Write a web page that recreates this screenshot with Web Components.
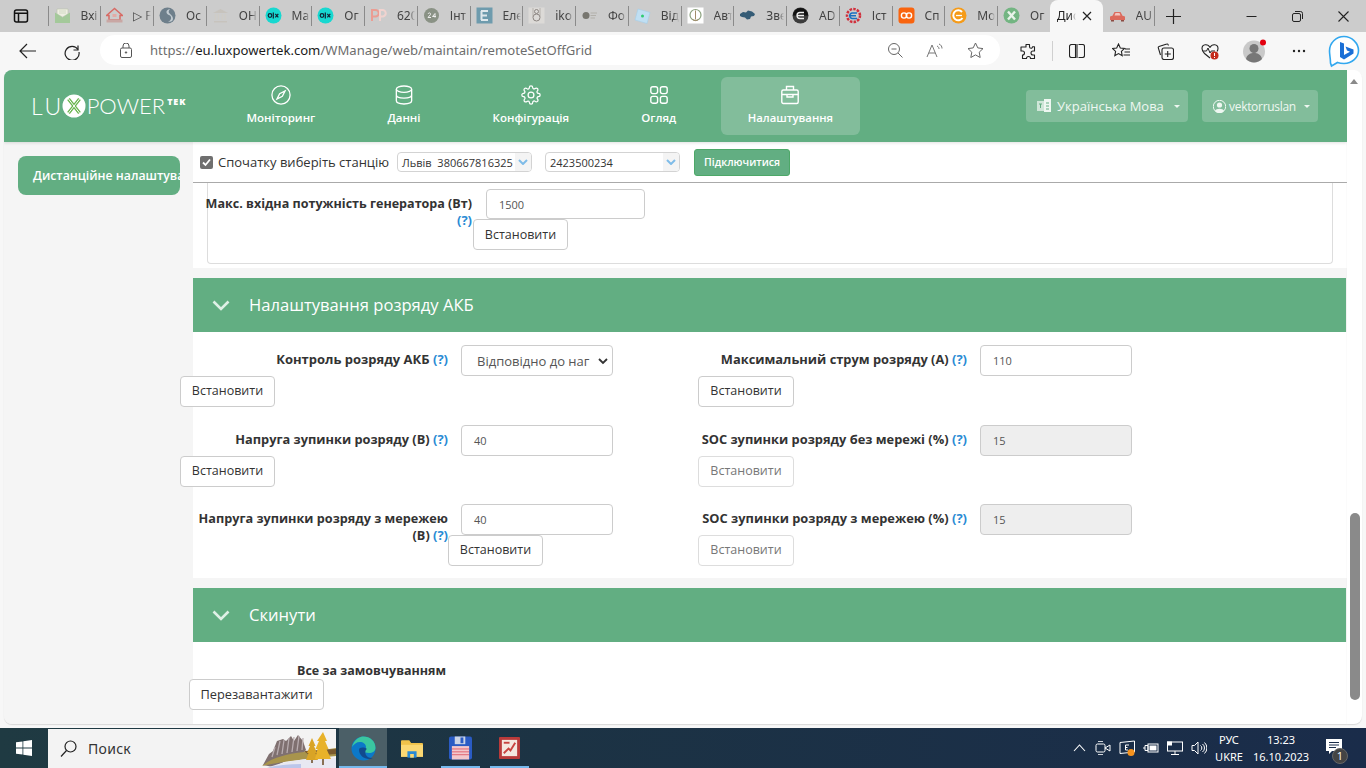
<!DOCTYPE html>
<html lang="uk">
<head>
<meta charset="utf-8">
<title>LuxPower</title>
<style>
    html, body { margin: 0; height: 100%; overflow: hidden; background: #f7f7f7; }
    body { display: flex; flex-direction: column; width: 1366px; height: 768px; font-family: "Open Sans", "Noto Sans", sans-serif; }
</style>
</head>
<body>
<browser-chrome></browser-chrome>
<page-frame>
    <app-header></app-header>
    <remote-panel></remote-panel>
</page-frame>
<win-taskbar></win-taskbar>

<script>
const tabIcons = {
    mail: '<path d="M3 7V2h11v5l-5.500 3z" fill="#eeeee2" stroke="#b9c4ac" stroke-width=".6"/><path d="M1 5.500l7.500 5 7.500-5V16H1z" fill="#a4c99a"/><path d="M5 4h7M5 6h7" stroke="#c9d4bc" stroke-width=".8"/>',
    house: '<path d="M8.500 1.500L.5 8.500h2.500V13h11V8.500h2.500z" fill="none" stroke="#d76a64" stroke-width="1.500"/><rect x=".5" y="12.500" width="16" height="3" fill="#c9a7a4"/><rect x="6.500" y="7" width="4" height="3" fill="#e3aaa5"/>',
    sphere: '<circle cx="8.500" cy="8.500" r="8" fill="#6e7f8b"/><path d="M11 2c-5 1-4 5-1 6s3 5-1 7c5 0 6-3 4-6s-5-3-2-7z" fill="#c3ccd2"/>',
    bank: '<path d="M8.500 2L1 6h15zM2 14h13v1.500H2z" fill="#c7c3bd"/><path d="M3.500 7v6M6.500 7v6M10.500 7v6M13.500 7v6" stroke="#cfccc6" stroke-width="1.400"/>',
    olx: '<circle cx="8.500" cy="8.500" r="8" fill="#17d8d0"/><circle cx="5" cy="8.500" r="1.800" fill="none" stroke="#123" stroke-width="1.200"/><path d="M8.300 5.500v6" stroke="#123" stroke-width="1.200"/><path d="M10.300 6.800l3 3.500m0-3.500l-3 3.500" stroke="#123" stroke-width="1.200"/>',
    pp: '<path d="M2 14V3h3.500a3 3 0 010 6.500H2" fill="none" stroke="#eb9d93" stroke-width="2"/><path d="M10 14V3h2.500a3 3 0 010 6.500H10" fill="none" stroke="#f1d3cf" stroke-width="2"/>',
    n24: '<circle cx="8.500" cy="8.500" r="7.500" fill="#8a9285"/><path d="M5 7c1-2 3-1 2.500.5L5 10.500h3M12 10.500v-4l-2.500 3h3.500" fill="none" stroke="#eee" stroke-width="1"/>',
    e: '<rect x=".5" y=".5" width="16" height="16" fill="#6e9bad"/><path d="M5 4h7M5 8.500h6M5 13h7M5.500 4v9" stroke="#dfe8ec" stroke-width="2" fill="none"/>',
    iko: '<rect x=".5" y=".5" width="16" height="16" fill="#dcdad7"/><circle cx="8.500" cy="10.500" r="3.500" fill="none" stroke="#8c8682"/><circle cx="8.500" cy="4.500" r="2" fill="none" stroke="#8c8682"/><path d="M5 1v9M12 1v9" stroke="#a6a19c" stroke-width=".7"/>',
    foto: '<circle cx="5" cy="8.500" r="3.500" fill="#77766f"/><path d="M9.500 6H16M9.500 8.500H15M9.500 11H14" stroke="#b2b0aa"/>',
    diamond: '<path d="M4 2l12 3.500-3 11L1 13z" fill="#c0dff3" stroke="#a5cfea" stroke-width=".6"/><circle cx="8.500" cy="9" r="1.500" fill="#2ecc71"/>',
    emblem: '<rect x=".5" y=".5" width="16" height="16" fill="#fff"/><circle cx="8.500" cy="8" r="5.500" fill="none" stroke="#8aa07d" stroke-width="1.200"/><path d="M8.500 3.500v9M5.500 12.500c2 1.500 4 1.500 6 0" stroke="#a28c6b" fill="none"/>',
    ukraine: '<path d="M1 7l3-2 3 .5 2-2 4 1 3 2.500-1 2-3 .5-1 2.500-3 .5-2-2-3-.5-2-1z" fill="#355c76"/>',
    dark: '<circle cx="8.500" cy="8.500" r="8" fill="#3c3c3c"/><path d="M1 8.500a7.500 7.500 0 0115 0z" fill="#111"/><path d="M12 5.500H8a3 3 0 000 6h4M5.500 8.500H12" stroke="#eee" fill="none" stroke-width="1.300"/>',
    gear: '<circle cx="8.500" cy="8.500" r="6.500" fill="none" stroke="#d12f3c" stroke-width="2.500" stroke-dasharray="2.500 1.200"/><path d="M12 6H7a2.800 2.800 0 000 5.500h5M5 8.700h6" fill="none" stroke="#1a6fc0" stroke-width="1.500"/>',
    orange: '<rect x=".5" y=".5" width="16" height="16" rx="3" fill="#f9640f"/><circle cx="6" cy="8.500" r="2.600" fill="none" stroke="#fff" stroke-width="1.400"/><circle cx="11" cy="8.500" r="2.600" fill="none" stroke="#fff" stroke-width="1.400"/>',
    swirl: '<circle cx="8.500" cy="8.500" r="8" fill="#f59b19"/><path d="M12 5a5 5 0 10.500 6" fill="none" stroke="#fff" stroke-width="2"/><path d="M6 8.500h6" stroke="#fff" stroke-width="1.300"/>',
    xgreen: '<circle cx="8.500" cy="8.500" r="8" fill="#73b582"/><path d="M5 4.500l7 8m0-8l-7 8" stroke="#e8f3e9" stroke-width="2.400"/>',
    car: '<path d="M1 9.500l2.500-.8L5.500 5h6l2 3.700 2.500.8V13H1z" fill="#dc6a5c"/><path d="M6.500 6h4l1 2.500h-6z" fill="#f3c5bf"/><rect x="2" y="13" width="3" height="1.500" fill="#8c4a42"/><rect x="12" y="13" width="3" height="1.500" fill="#8c4a42"/>'
};

class BrowserTab extends HTMLElement {
    connectedCallback() {
        const root = this.attachShadow({ mode: 'open' });
        const icon = this.getAttribute('icon');
        root.innerHTML = `
            <style>
                :host { display: block; position: relative; width: 52.750px; height: 32px; flex: none; }
                :host([sep])::before { content: ''; position: absolute; left: 0; top: 6px; height: 20px; width: 1px; background: #8a8a8a; }
                :host([active]) { background: #f7f7f7; border-radius: 8px 8px 0 0; }
                :host(:last-child) { width: 51px; }
                svg { position: absolute; left: 6px; top: 7px; width: 17px; height: 17px; }
                .label {
                    position: absolute; left: 33px; top: 7px; width: 18px; overflow: hidden; white-space: nowrap;
                    font: 12px/18px "Noto Sans", "Open Sans", sans-serif; color: #444;
                    -webkit-mask-image: linear-gradient(90deg, #000 70%, transparent);
                    mask-image: linear-gradient(90deg, #000 70%, transparent);
                }
                :host([active]) .label { left: 7px; width: 19px; color: #222; }
            </style>
            ${icon ? `<svg viewBox="0 0 17 17">${tabIcons[icon]}</svg>` : ''}
            <span class="label"><slot></slot></span>
            ${this.hasAttribute('active') ? '<svg style="left:32px;top:11px;width:10px;height:10px" viewBox="0 0 10 10"><path d="M1 1l8 8m0-8l-8 8" stroke="#222" stroke-width="1.200"/></svg>' : ''}
        `;
    }
}

class BrowserChrome extends HTMLElement {
    connectedCallback() {
        const root = this.attachShadow({ mode: 'open' });
        const tabs = [
            ['mail', 'Вхі'], ['house', '▷ F'], ['sphere', 'Ос'], ['bank', 'ОН'], ['olx', 'Ма'], ['olx', 'Ог'], ['pp', '620'],
            ['n24', 'Інт'], ['e', 'Еле'], ['iko', 'iko'], ['foto', 'Фо'], ['diamond', 'Від'], ['emblem', 'Авт'], ['ukraine', 'Зве'],
            ['dark', 'AD'], ['gear', 'Іст'], ['orange', 'Сп'], ['swirl', 'Мо'], ['xgreen', 'Ог'], ['', 'Дис'], ['car', 'AU']
        ];
        const tabHtml = tabs.map(([icon, text], i) => {
            const active = i === 19 ? ' active' : '';
            const sep = i === 19 || i === 20 ? '' : ' sep';
            return `<browser-tab icon="${icon}"${active}${sep}>${text}</browser-tab>`;
        }).join('');

        root.innerHTML = `
            <style>
                :host { display: block; flex: none; }
                .tabs { display: flex; height: 32px; background: #cccccc; }
                .tab-list { display: flex; }
                .slot { display: flex; align-items: center; justify-content: center; flex: none; }
                .tabs-toggle { width: 47.500px; padding-right: 6px; box-sizing: border-box; }
                .new-tab { width: 38px; border-left: 1px solid #8a8a8a; height: 20px; margin-top: 6px; box-sizing: border-box; }
                .spacer { flex: 1; }
                .win { width: 46px; }
                .bar { display: flex; align-items: center; height: 38px; background: #f7f7f7; padding-left: 6px; box-sizing: border-box; }
                .nav { width: 44px; height: 38px; }
                .address {
                    display: flex; align-items: center; width: 901px; height: 30px; margin-left: 6px; margin-top: -2px;
                    background: #fff; border-radius: 15px; padding: 0 5px 0 17px; box-sizing: border-box;
                }
                .lock { width: 18px; }
                .url { margin-left: 15px; flex: 1; font: 13.100px/18px "Noto Sans", "Open Sans", sans-serif; color: #6d6d6d; white-space: nowrap; }
                .url b { font-weight: 400; color: #1c1c1c; }
                .in { width: 40px; }
                .tools { display: flex; align-items: center; margin-left: 6px; }
                .tool { width: 44.500px; height: 38px; }
                .sep { width: 1px; height: 20px; background: #d0d0d0; margin: 0 1.500px; }
                svg { display: block; }
            </style>
            <div class="tabs">
                <div class="slot tabs-toggle">
                    <svg width="16" height="16" viewBox="0 0 16 16" fill="none" stroke="#111" stroke-width="1.500"><rect x="1.500" y="2" width="13" height="12" rx="2"/><path d="M1.500 5.200h13M5.500 5.200V14"/></svg>
                </div>
                <div class="tab-list">${tabHtml}</div>
                <div class="slot new-tab">
                    <svg width="15" height="15" viewBox="0 0 15 15"><path d="M7.500 0v15M0 7.500h15" stroke="#222" stroke-width="1.200"/></svg>
                </div>
                <div class="spacer"></div>
                <div class="slot win"><svg width="11" height="11" viewBox="0 0 11 11"><path d="M.5 5.500h10" stroke="#222"/></svg></div>
                <div class="slot win"><svg width="11" height="11" viewBox="0 0 11 11" fill="none" stroke="#222"><rect x=".5" y="2.500" width="8" height="8" rx="1.500"/><path d="M3 .5h5.500a2 2 0 012 2V8"/></svg></div>
                <div class="slot win"><svg width="11" height="11" viewBox="0 0 11 11"><path d="M.5.500l10 10m0-10l-10 10" stroke="#222" stroke-width="1.100"/></svg></div>
            </div>
            <div class="bar">
                <div class="slot nav"><svg width="18" height="16" viewBox="0 0 18 16" fill="none" stroke="#222" stroke-width="1.200"><path d="M17 8H1M8 1L1 8l7 7"/></svg></div>
                <div class="slot nav"><svg width="18" height="18" viewBox="0 0 18 18" fill="none" stroke="#222" stroke-width="1.200"><path d="M15 3.500V8h-4.500"/><path d="M15 7.500A7 7 0 1016 10"/></svg></div>
                <div class="address">
                    <div class="slot lock"><svg width="12" height="15" viewBox="0 0 12 15" fill="none" stroke="#555"><rect x=".5" y="5" width="11" height="9.500" rx="1.500"/><path d="M3 5V3a3 3 0 016 0v2"/><circle cx="6" cy="9.500" r=".7" fill="#555"/></svg></div>
                    <span class="url">https://<b>eu.luxpowertek.com</b>/WManage/web/maintain/remoteSetOffGrid</span>
                    <div class="slot in"><svg width="15" height="15" viewBox="0 0 15 15" fill="none" stroke="#666"><circle cx="6" cy="6" r="5.500"/><path d="M3.500 6h5M10 10l4.500 4.500"/></svg></div>
                    <div class="slot in"><svg width="18" height="15" viewBox="0 0 18 15" fill="none" stroke="#777"><path d="M1 14L6 2l5 12M2.800 10h6.400"/><path d="M11 3c1.500.5 2 2 2 3M13 1c2 .8 3 2.500 3 4.500"/></svg></div>
                    <div class="slot in"><svg width="17" height="16" viewBox="0 0 17 16" fill="none" stroke="#666"><path d="M8.500 1l2.300 4.900 5.200.7-3.800 3.600 1 5.300-4.700-2.600-4.700 2.600 1-5.300L1 6.600l5.200-.7z"/></svg></div>
                </div>
                <div class="tools">
                    <div class="slot tool"><svg width="16" height="17" viewBox="0 0 16 17" fill="none" stroke="#222" stroke-width="1.100"><path d="M6 1.500h3.500v2.300a1.500 1.500 0 003 0h2V8h-1.500a2 2 0 000 4H14.500v3.500H10.500a2 2 0 00-4 0H2.500V12a2 2 0 000-4H1V4h5z" stroke-linejoin="round"/></svg></div>
                    <div class="sep"></div>
                    <div class="slot tool"><svg width="16" height="14" viewBox="0 0 16 14" fill="none" stroke="#222" stroke-width="1.100"><path d="M6.500 .5H2.500a2 2 0 00-2 2v9a2 2 0 002 2h4zM9.500 .5h4a2 2 0 012 2v9a2 2 0 01-2 2h-4M8 0v14"/></svg></div>
                    <div class="slot tool"><svg width="18" height="16" viewBox="0 0 18 16" fill="none" stroke="#222" stroke-width="1.100"><path d="M6.500 1l1.800 4 4.200.5-3.100 2.900.8 4.300-3.700-2.100-3.700 2.100.8-4.300L.5 5.500 4.700 5zM13 6h5M12.500 9h5.500M11.500 12H18"/></svg></div>
                    <div class="slot tool"><svg width="17" height="17" viewBox="0 0 17 17" fill="none" stroke="#222" stroke-width="1.100"><rect x="5" y="5" width="11.500" height="11.500" rx="2"/><path d="M10.700 8v6M7.800 11h6"/><path d="M11.500 2.500l-.4-.9a1 1 0 00-1.300-.5L2 3.500a1 1 0 00-.7 1.300L3.500 12"/></svg></div>
                    <div class="slot tool"><svg width="18" height="17" viewBox="0 0 18 17"><path d="M9 4.500C7 .500 1 1 1 5.500c0 2 1 3.500 2.500 5L9 15" fill="none" stroke="#222" stroke-width="1.100"/><path d="M9 4.500c2-4 8-3.500 8 1 0 1-.3 2-1 3" fill="none" stroke="#222" stroke-width="1.100"/><path d="M2 8h3.500l1.500-3 2 5 1.200-2H14" fill="none" stroke="#222" stroke-width="1"/><circle cx="13.500" cy="12.500" r="4" fill="#c42b1c"/><path d="M13.500 10v3M13.500 14v1" stroke="#fff"/></svg></div>
                    <div class="slot tool"><svg width="24" height="24" viewBox="0 0 24 24"><circle cx="11" cy="12.500" r="11" fill="#c9c9c9"/><circle cx="11" cy="9.500" r="4.500" fill="#777"/><path d="M3 20c1-5 5-6 8-6s7 1 8 6a11 11 0 01-16 0z" fill="#777"/><circle cx="20" cy="3.500" r="3" fill="#e3000f"/></svg></div>
                    <div class="slot tool"><svg width="14" height="4" viewBox="0 0 14 4" fill="#222"><circle cx="2" cy="2" r="1.200"/><circle cx="7" cy="2" r="1.200"/><circle cx="12" cy="2" r="1.200"/></svg></div>
                    <div class="slot tool"><svg width="32" height="33" viewBox="0 0 32 33"><path d="M16 1.500C8 1.500 1.500 8 1.500 16c0 4 1 7 1 12l1 3 6-3.500c2 .7 4 1 6.500 1 8 0 14.500-6 14.500-13S24 1.500 16 1.500z" fill="#fff" stroke="#32a8ef" stroke-width="1.600"/><path d="M12 7l4 1.500V20l6-3.300-3-1.300-1.500-4 8 3v4L16 24.500l-4-2.500z" fill="#1b6fd6"/></svg></div>
                </div>
            </div>
        `;
    }
}

class PageFrame extends HTMLElement {
    connectedCallback() {
        const root = this.attachShadow({ mode: 'open' });
        root.innerHTML = `
            <style>
                :host { display: flex; flex: none; height: 658px; padding: 0 4px 4px 4px; box-sizing: border-box; background: #f7f7f7; }
                .page {
                    display: flex; flex-direction: column; width: 1343px; height: 654px; overflow: hidden;
                    border-radius: 8px 0 0 8px; background: #f5f5f5; box-shadow: 0 1px 1px #d8d8d8;
                }
                .scrollbar { position: relative; width: 15px; background: #fff; border-radius: 0 8px 8px 0; box-shadow: 0 1px 1px #d8d8d8; }
                .up { position: absolute; left: 3px; top: 9px; width: 0; height: 0; border: 4.500px solid transparent; border-top: 0; border-bottom: 5px solid #8a8a8a; }
                .thumb { position: absolute; left: 3px; top: 443px; width: 10px; height: 187px; border-radius: 5px; background: #8a8a8a; }
            </style>
            <div class="page"><slot></slot></div>
            <div class="scrollbar"><div class="up"></div><div class="thumb"></div></div>
        `;
    }
}

class NavItem extends HTMLElement {
    connectedCallback() {
        const root = this.attachShadow({ mode: 'open' });
        root.innerHTML = `
            <style>
                :host {
                    display: flex; flex-direction: column; align-items: center; height: 58px; padding: 8px 27.500px 0; box-sizing: border-box;
                    border-radius: 6px; color: #fff; font-size: 11.500px; font-weight: 600; line-height: 16px; white-space: nowrap;
                }
                :host([active]) { background: #82bd9b; font-size: 11.300px; padding: 8px 27px 0; }
                ::slotted(svg) { display: block; margin-bottom: 5px; }
            </style>
            <slot name="icon"></slot>
            <slot></slot>
        `;
    }
}

class AppHeader extends HTMLElement {
    connectedCallback() {
        const root = this.attachShadow({ mode: 'open' });
        root.innerHTML = `
            <style>
                :host {
                    display: flex; align-items: center; flex: none; height: 72px; padding: 0 29px; box-sizing: border-box;
                    background: #62ae82; box-shadow: 0 1px 3px rgba(0,0,0,.12); position: relative; z-index: 2;
                }
                .logo {
                    display: flex; align-items: center; width: 188px; margin-left: -2px; flex: none; color: #fff; font: 300 22px/24px Lato, "Open Sans", sans-serif;
                }
                .logo .lu { font-size: 23px; letter-spacing: 2.500px; }
                .logo svg { margin: 0 1px 0 -2px; flex: none; }
                .logo sup { font: 800 9px/8px "Open Sans", sans-serif; letter-spacing: .9px; align-self: flex-start; margin: 4px 0 0 2px; }
                nav { display: flex; gap: 17.100px; }
                .grow { flex: 1; }
                .pill {
                    display: flex; align-items: center; height: 32px; border-radius: 4px; background: #82bd9b; color: #eef7f1;
                    font-size: 13px; box-sizing: border-box; flex: none;
                }
                .lang { width: 162px; padding-left: 11px; margin-right: 14px; }
                .user { width: 116px; padding-left: 11px; font-size: 12px; letter-spacing: -.3px; }
                .caret { width: 0; height: 0; border: 3px solid transparent; border-top-color: #eef7f1; border-bottom: 0; margin-left: auto; margin-right: 8px; }
            </style>
            <div class="logo">
                <span class="lu">LU</span><svg width="24" height="24" viewBox="0 0 24 24"><circle cx="12" cy="12" r="11.500" fill="#fff"/><path d="M6.500 5l11 14m0-14l-11 14" stroke="#6ab54f" stroke-width="3.400"/><path d="M6.500 5l11 14m0-14l-11 14" stroke="#fff" stroke-width="1"/></svg><span>POWER</span><sup>TEK</sup>
            </div>
            <nav>
                <nav-item>
                    <svg slot="icon" width="20" height="20" viewBox="0 0 22 22" fill="none" stroke="#fff" stroke-width="1.400"><circle cx="11" cy="11" r="10"/><path d="M15.500 6.500l-3 6-6 3 3-6z"/></svg>
                    Моніторинг
                </nav-item>
                <nav-item>
                    <svg slot="icon" width="18" height="20" viewBox="0 0 20 22" fill="none" stroke="#fff" stroke-width="1.500"><ellipse cx="10" cy="4.500" rx="8.500" ry="3.500"/><path d="M1.500 4.500v13c0 2 3.800 3.500 8.500 3.500s8.500-1.500 8.500-3.500v-13M1.500 11c0 2 3.800 3.500 8.500 3.500s8.500-1.500 8.500-3.500"/></svg>
                    Данні
                </nav-item>
                <nav-item>
                    <svg slot="icon" width="20" height="20" viewBox="0 0 24 24" fill="none" stroke="#fff" stroke-width="1.500"><circle cx="12" cy="12" r="3.500"/><path d="M19.400 15a1.650 1.650 0 0 0 .33 1.820l.06.06a2 2 0 0 1 0 2.830 2 2 0 0 1-2.830 0l-.06-.06a1.650 1.650 0 0 0-1.820-.33 1.650 1.650 0 0 0-1 1.510V21a2 2 0 0 1-2 2 2 2 0 0 1-2-2v-.09A1.650 1.650 0 0 0 9 19.400a1.650 1.650 0 0 0-1.820.33l-.06.06a2 2 0 0 1-2.830 0 2 2 0 0 1 0-2.830l.06-.06a1.650 1.650 0 0 0 .33-1.820 1.650 1.650 0 0 0-1.510-1H3a2 2 0 0 1-2-2 2 2 0 0 1 2-2h.09A1.650 1.650 0 0 0 4.600 9a1.650 1.650 0 0 0-.33-1.820l-.06-.06a2 2 0 0 1 0-2.830 2 2 0 0 1 2.830 0l.06.06a1.650 1.650 0 0 0 1.820.33H9a1.650 1.650 0 0 0 1-1.510V3a2 2 0 0 1 2-2 2 2 0 0 1 2 2v.09a1.650 1.650 0 0 0 1 1.510 1.650 1.650 0 0 0 1.820-.33l.06-.06a2 2 0 0 1 2.830 0 2 2 0 0 1 0 2.830l-.06.06a1.650 1.650 0 0 0-.33 1.820V9a1.650 1.650 0 0 0 1.510 1H21a2 2 0 0 1 2 2 2 2 0 0 1-2 2h-.09a1.650 1.650 0 0 0-1.510 1z"/></svg>
                    Конфігурація
                </nav-item>
                <nav-item>
                    <svg slot="icon" width="18" height="20" viewBox="0 0 18 20" fill="none" stroke="#fff" stroke-width="1.400"><rect x=".8" y="1.800" width="6.800" height="6.800" rx="2"/><rect x="10.400" y="1.800" width="6.800" height="6.800" rx="2"/><rect x=".8" y="11.400" width="6.800" height="6.800" rx="2"/><rect x="10.400" y="11.400" width="6.800" height="6.800" rx="2"/></svg>
                    Огляд
                </nav-item>
                <nav-item active>
                    <svg slot="icon" width="18" height="20" viewBox="0 0 18 20" fill="none" stroke="#fff" stroke-width="1.400"><rect x=".8" y="5" width="16.400" height="13.500" rx="1.500"/><path d="M5.500 5V1.500h7V5M.8 9.500h16.400M6 9.500V12h6V9.500"/></svg>
                    Налаштування
                </nav-item>
            </nav>
            <div class="grow"></div>
            <div class="pill lang">
                <svg width="14" height="14" viewBox="0 0 14 14" style="margin-right:6px"><rect x="0" y="2" width="7" height="10" fill="#cfe6d8"/><rect x="7" y="0" width="7" height="13" fill="#eef7f1"/><path d="M2 5h3M3.500 5v4M9 4h3M9 7h3M9 10h3" stroke="#62ae82"/></svg>
                Українська Мова
                <span class="caret"></span>
            </div>
            <div class="pill user">
                <svg width="13" height="13" viewBox="0 0 13 13" style="margin-right:3px"><circle cx="6.500" cy="6.500" r="6.200" fill="none" stroke="#eef7f1"/><circle cx="6.500" cy="5" r="2.600" fill="#eef7f1"/><path d="M2 11c1-3 8-3 9 0a6 6 0 01-9 0z" fill="#eef7f1"/></svg>
                vektorruslan
                <span class="caret"></span>
            </div>
        `;
    }
}

class FakeSelect extends HTMLElement {
    connectedCallback() {
        const root = this.attachShadow({ mode: 'open' });
        root.innerHTML = `
            <style>
                :host {
                    display: flex; align-items: center; width: 135px; height: 20px; box-sizing: border-box; flex: none; overflow: hidden;
                    border: 1px solid #d3d3d3; border-radius: 4px; background: #fff; font-size: 11px; color: #333; white-space: pre;
                }
                .text { flex: 1; overflow: hidden; padding-left: 4px; }
                .arrow { width: 16px; height: 100%; display: flex; align-items: center; justify-content: center; background: #f4f4f4; flex: none; }
            </style>
            <span class="text"><slot></slot></span>
            <span class="arrow"><svg width="10" height="6" viewBox="0 0 10 6" fill="none" stroke="#7fbce8" stroke-width="2"><path d="M1 1l4 4 4-4"/></svg></span>
        `;
    }
}

class SettingField extends HTMLElement {
    connectedCallback() {
        const root = this.attachShadow({ mode: 'open' });
        const disabled = this.hasAttribute('disabled');
        const isSelect = this.hasAttribute('select');
        root.innerHTML = `
            <style>
                :host { display: block; }
                .row { display: flex; align-items: flex-start; height: var(--row-h, 31px); }
                label {
                    display: block; width: var(--label-w, 249px); margin-right: var(--gap, 13px); padding-top: 6px; flex: none; text-align: right;
                    font-size: var(--label-size, 12.800px); font-weight: 700; line-height: 17px; color: #333;
                }
                .hint { color: #2a8bd4; font-size: 13px; }
                .box {
                    display: flex; align-items: center; width: var(--input-w, 152px); height: var(--row-h, 31px); box-sizing: border-box; padding-left: 12px; flex: none;
                    border: 1px solid #ccc; border-radius: 4px; background: #fff; font-size: 11px; color: #555;
                }
                .box.off { background: #eee; }
                .box.select { font-size: 13px; padding-left: 15px; position: relative; overflow: hidden; white-space: nowrap; }
                .box.select span { display: block; width: 119px; overflow: hidden; }
                .box.select svg { position: absolute; right: 4px; top: 12px; }
                button {
                    display: block; width: var(--btn-w, 95px); height: 31px; margin-left: var(--btn-x, 0px); padding: 0 0 var(--btn-pb, 2px); box-sizing: border-box;
                    border: 1px solid #ccc; border-radius: 4px; background: #fff; color: #333; font: 12.500px "Open Sans", sans-serif;
                }
                button[disabled] { color: #777; border-color: #ddd; }
            </style>
            <div class="row">
                <label><slot></slot> <span class="hint">(?)</span></label>
                <div class="box${disabled ? ' off' : ''}${isSelect ? ' select' : ''}">
                    ${isSelect ? `<span>${this.getAttribute('value')}</span><svg width="10" height="7" viewBox="0 0 10 7" fill="none" stroke="#333" stroke-width="1.800"><path d="M1 1l4 4 4-4"/></svg>` : this.getAttribute('value')}
                </div>
            </div>
            <button${disabled ? ' disabled' : ''}>Встановити</button>
        `;
    }
}

class SectionPanel extends HTMLElement {
    connectedCallback() {
        const root = this.attachShadow({ mode: 'open' });
        root.innerHTML = `
            <style>
                :host { display: block; margin-top: 10px; }
                .head {
                    display: flex; align-items: center; width: 1153px; height: 54px; padding-left: 19px; box-sizing: border-box;
                    background: #62ae82; color: #fff; font-size: 16.600px;
                }
                svg { margin-right: 19px; }
                .title { margin-top: -2px; }
                .body { background: #fff; }
            </style>
            <div class="head">
                <svg width="18" height="11" viewBox="0 0 18 11" fill="none" stroke="#dff0e6" stroke-width="2.600"><path d="M1.500 1.500L9 9l7.500-7.500"/></svg>
                <span class="title">${this.getAttribute('heading')}</span>
            </div>
            <div class="body"><slot></slot></div>
        `;
    }
}

class RemotePanel extends HTMLElement {
    connectedCallback() {
        const root = this.attachShadow({ mode: 'open' });
        root.innerHTML = `
            <style>
                :host { display: flex; flex: 1; min-height: 0; }
                aside { width: 189px; flex: none; padding: 14px 0 0 14px; box-sizing: border-box; background: #f5f5f5; }
                .side-btn {
                    display: flex; align-items: center; width: 162px; height: 39px; padding-left: 15px; box-sizing: border-box; overflow: hidden;
                    border-radius: 8px; background: #62ae82; color: #fff; font-size: 12.300px; font-weight: 600; white-space: nowrap;
                }
                main { display: flex; flex-direction: column; flex: 1; min-width: 0; position: relative; }
                .station {
                    display: flex; align-items: center; flex: none; height: 41px; padding-left: 7px; box-sizing: border-box;
                    background: #fff; border-bottom: 1px solid #aaa; font-size: 13px; color: #333;
                }
                .check { width: 13px; height: 13px; border-radius: 2px; background: #6f6f6f; flex: none; display: flex; align-items: center; justify-content: center; margin-right: 5px; }
                .station .text { width: 179px; flex: none; white-space: nowrap; }
                .connect {
                    display: flex; align-items: center; justify-content: center; width: 96px; height: 27px; margin-left: 14px; box-sizing: border-box; flex: none;
                    border: 1px solid #4da868; border-radius: 3px; background: #62ae82; color: #fff; font-size: 10.500px; font-weight: 600;
                }
                fake-select + fake-select { margin-left: 13px; }
                .scroll { flex: 1; min-height: 0; background: #f5f5f5; }
                .first { background: #fff; padding: 0 14px 4px; height: 85px; box-sizing: border-box; }
                .inner {
                    height: 81px; padding: 6px 0 0; box-sizing: border-box; border: 1px solid #ddd; border-top: 0; border-radius: 0 0 4px 4px;
                }
                .inner setting-field { margin-left: -3px; --label-w: 267px; --input-w: 159px; --btn-x: 268px; --gap: 14px; --row-h: 30px; --label-size: 12.550px; --btn-pb: 0px; }
                .grid {
                    display: grid; grid-template-columns: 499px 1fr; row-gap: 17.500px; padding: 13px 0 12px 6px;
                }
                .left { --btn-x: -19px; }
                .right { --label-w: 269px; --btn-w: 96px; --label-size: 12.850px; }
                .left.big { --label-size: 13px; }
                .left.shift { --btn-x: 250px; --label-w: 250px; --gap: 13px; margin-left: -1px; --label-size: 12.700px; }
                .reset { height: 82px; padding: 20px 0 0 104px; box-sizing: border-box; }
                .reset .title { width: 149px; font-size: 12.500px; font-weight: 700; line-height: 17px; color: #333; white-space: nowrap; }
                .reset button {
                    display: block; width: 135px; height: 31px; margin-left: -108px; padding: 0 0 2px; border: 1px solid #ccc; border-radius: 4px;
                    background: #fff; color: #333; font: 12.800px "Open Sans", sans-serif; box-sizing: border-box;
                }
            </style>
            <aside><div class="side-btn">Дистанційне налаштування</div></aside>
            <main>
                <div class="station">
                    <span class="check"><svg width="9" height="9" viewBox="0 0 9 9" fill="none" stroke="#fff" stroke-width="1.800"><path d="M1 4.500l2.500 2.500L8 1.500"/></svg></span>
                    <span class="text">Спочатку виберіть станцію</span>
                    <fake-select>Львів  380667816325</fake-select>
                    <fake-select>2423500234</fake-select>
                    <div class="connect">Підключитися</div>
                </div>
                <div class="scroll">
                    <div class="first">
                        <div class="inner">
                            <setting-field value="1500">Макс. вхідна потужність генератора (Вт)</setting-field>
                        </div>
                    </div>
                    <section-panel heading="Налаштування розряду АКБ">
                        <div class="grid">
                            <setting-field class="left big" select value="Відповідно до наг">Контроль розряду АКБ</setting-field>
                            <setting-field class="right" value="110">Максимальний струм розряду (А)</setting-field>
                            <setting-field class="left" value="40">Напруга зупинки розряду (В)</setting-field>
                            <setting-field class="right" disabled value="15">SOC зупинки розряду без мережі (%)</setting-field>
                            <setting-field class="left shift" value="40">Напруга зупинки розряду з мережею (В)</setting-field>
                            <setting-field class="right" disabled value="15">SOC зупинки розряду з мережею (%)</setting-field>
                        </div>
                    </section-panel>
                    <section-panel heading="Скинути">
                        <div class="reset">
                            <div class="title">Все за замовчуванням</div>
                            <button>Перезавантажити</button>
                        </div>
                    </section-panel>
                </div>
            </main>
        `;
    }
}

class WinTaskbar extends HTMLElement {
    connectedCallback() {
        const root = this.attachShadow({ mode: 'open' });
        root.innerHTML = `
            <style>
                :host {
                    display: flex; align-items: stretch; flex: none; height: 40px; color: #fff; position: relative;
                    background: linear-gradient(90deg, #1f3a42, #1c3344 40%, #1a2c4a);
                    font: 11px/17px "Noto Sans", "Open Sans", sans-serif;
                }
                .start { width: 48px; display: flex; align-items: center; justify-content: center; flex: none; padding-right: 1px; box-sizing: border-box; }
                .search {
                    display: flex; align-items: center; width: 288px; margin-top: 1px; padding-left: 12px; box-sizing: border-box; flex: none; position: relative; overflow: hidden;
                    background: #f3f3f3; color: #333; font-size: 14px; letter-spacing: .3px;
                }
                .search span { margin-left: 11px; }
                .art { position: absolute; right: 0; top: 0; }
                .app { width: 49px; display: flex; align-items: center; justify-content: center; flex: none; position: relative; }
                .app.first { width: 48px; margin-left: 3px; background: #4b5f67; }
                .app.open::after { content: ''; position: absolute; left: 5px; right: 5px; bottom: 0; height: 2px; background: #76b9ed; }
                .app.first::after { left: 0; right: 0; }
                .grow { flex: 1; }
                .tray { display: flex; align-items: center; margin-right: 14px; }
                .tray-icon { width: 24px; display: flex; justify-content: center; align-items: center; flex: none; }
                .lang { width: 36px; text-align: center; }
                .clock { width: 68px; text-align: center; }
                .notify { width: 37px; height: 40px; position: relative; display: flex; justify-content: center; align-items: center; }
                .notify svg { margin-top: -3px; }
                .badge {
                    position: absolute; left: 17px; top: 20px; width: 16px; height: 16px; border-radius: 50%; background: #444; color: #fff;
                    font: 11px/14px "Open Sans", sans-serif; text-align: center; border: 1px solid #666; box-sizing: border-box;
                }
            </style>
            <div class="start">
                <svg width="16" height="16" viewBox="0 0 16 16" fill="#fff"><path d="M0 2.300L6.500 1.400v6.200H0zM7.300 1.300L16 0v7.600H7.300zM0 8.400h6.500v6.200L0 13.700zM7.300 8.400H16V16l-8.700-1.300z"/></svg>
            </div>
            <div class="search">
                <svg width="17" height="18" viewBox="0 0 17 18" fill="none" stroke="#222" stroke-width="1.200"><circle cx="10.500" cy="6.500" r="5.500"/><path d="M6.500 10.500L1 16.500"/></svg>
                <span>Поиск</span>
                <svg class="art" width="76" height="39" viewBox="0 0 76 39">
                    <path d="M3 36l6-11 4-3 4-10 6-2 3 2 5-5 3 5 4-6 5 6 3 9-3 3-30 14z" fill="#7f7070"/>
                    <path d="M12 28l3-10M17 26l3-14M22 25l2-14M27 24l2-15M32 23l2-15M37 22l2-15M42 21l1-12" stroke="#b9adb0" fill="none" stroke-width="1.300"/>
                    <path d="M2 37c8-7 22-12 42-14l12-1 20-3v8l-30 3c-16 2-30 4-44 7z" fill="#a8944c"/>
                    <path d="M44 22l32-2v5l-26 2z" fill="#7a5a2e"/>
                    <path d="M7 39c14-6 36-10 69-10v10z" fill="#e8e8f2"/>
                    <path d="M7 39c10-3 22-4 34-4v4z" fill="#bcc6ea"/>
                    <path d="M52 9l3.500 8h-1.500l3 7h-1.500l2.500 7H46l2.500-7H47l3-7h-1.500z" fill="#d9a426"/>
                    <path d="M63 3l4 9h-2l3.500 8h-2L71 30H55l2.500-10h-2l3.500-8h-2z" fill="#e8b22a"/>
                    <path d="M52 31v3M63 30v6" stroke="#6a4a22" stroke-width="1.500"/>
                </svg>
            </div>
            <div class="app first open">
                <svg width="25" height="25" viewBox="0 0 25 25"><circle cx="12.500" cy="12.500" r="12" fill="#0c78c8"/><path d="M1 11C3 3 9 .5 12.500.5 19 .5 24.500 5 24.500 12c0 3-3 5-6.500 5-3 0-5-1-5-2 0-1.500 2-1 2-4 0-3-3-5-6-5-3.500 0-6 2-8 5z" fill="#3ac6a0"/><path d="M8 14c0 5 5 9 10 9 2 0 3-.5 4-1-3 .5-6-1-7-3-1.500-3 0-6 1-6-3-2-8-2-8 1z" fill="#114a8e"/></svg>
            </div>
            <div class="app">
                <svg width="22" height="19" viewBox="0 0 24 20"><path d="M0 2a1 1 0 011-1h8l2 3h12a1 1 0 011 1v14H0z" fill="#f0c24a"/><path d="M0 6h24v13H0z" fill="#fbd873"/><rect x="7" y="13" width="10" height="7" fill="#2a8ad4"/><rect x="10" y="16" width="4" height="4" fill="#fbd873"/></svg>
            </div>
            <div class="app open">
                <svg width="23" height="24" viewBox="0 0 24 24"><rect width="24" height="24" rx="2" fill="#2a5bc4"/><rect x="6" y="0" width="11" height="8" fill="#cbd4e6"/><rect x="12" y="1" width="3" height="6" fill="#2a5bc4"/><rect x="3" y="10" width="18" height="14" fill="#f3c8cc"/><path d="M3 13h18M3 16h18M3 19h18" stroke="#e0616e"/></svg>
            </div>
            <div class="app open">
                <svg width="21" height="22" viewBox="0 0 22 23"><rect width="22" height="23" rx="1" fill="#b93a3a"/><rect x="3" y="3" width="16" height="17" fill="#f4e7e0"/><path d="M5 17l5-5 2 2 5-8" stroke="#c8423f" stroke-width="2" fill="none"/><path d="M5 6h6" stroke="#c8423f" stroke-width="2"/></svg>
            </div>
            <div class="grow"></div>
            <div class="tray">
                <div class="tray-icon"><svg width="13" height="8" viewBox="0 0 13 8" fill="none" stroke="#fff" stroke-width="1.100"><path d="M1 7l5.500-6L12 7"/></svg></div>
                <div class="tray-icon"><svg width="16" height="16" viewBox="0 0 16 16" fill="none" stroke="#fff"><rect x="1" y="4" width="9" height="8" rx="1.500"/><path d="M10 8l5-3v6z"/><path d="M3 1.500h5M3 14.500h5" stroke-width=".8"/></svg></div>
                <div class="tray-icon"><svg width="17" height="17" viewBox="0 0 17 17"><path d="M1 2.500L15.500 1v11L1 13.500z" fill="none" stroke="#fff"/><path d="M10 5H6.500v5H9M6.500 7.500h2" stroke="#fff" fill="none"/><circle cx="12" cy="12.500" r="3.500" fill="#f7931e"/></svg></div>
                <div class="tray-icon"><svg width="16" height="12" viewBox="0 0 16 12"><rect x="5" y="2" width="10" height="8" fill="none" stroke="#fff"/><rect x="6.500" y="3.500" width="7" height="5" fill="#fff"/><path d="M0 6h2M2 3.500h3v5H2z" stroke="#fff" fill="none"/></svg></div>
                <div class="tray-icon"><svg width="16" height="16" viewBox="0 0 16 16" fill="none" stroke="#fff"><rect x=".5" y="2" width="15" height="9"/><rect x=".5" y="2" width="4" height="3" fill="#fff"/><path d="M8 11v3M4 14.500h8"/></svg></div>
                <div class="tray-icon"><svg width="16" height="14" viewBox="0 0 16 14" fill="none" stroke="#fff"><path d="M1 4.500h2.500L7 1v12l-3.500-3.500H1z"/><path d="M9.500 4.500a3 3 0 010 5M11.500 3a5 5 0 010 8M13.500 1.500a7.500 7.500 0 010 11"/></svg></div>
                <div class="lang">РУС<br>UKRE</div>
                <div class="clock">13:23<br>16.10.2023</div>
                <div class="notify">
                    <svg width="16" height="15" viewBox="0 0 16 15" fill="#fff"><path d="M0 0h16v12H6l-3 3v-3H0z"/><path d="M3 3.500h10M3 6h10M3 8.500h7" stroke="#1a2c4a"/></svg>
                    <span class="badge">1</span>
                </div>
            </div>
        `;
    }
}

customElements.define('browser-tab', BrowserTab);
customElements.define('browser-chrome', BrowserChrome);
customElements.define('page-frame', PageFrame);
customElements.define('nav-item', NavItem);
customElements.define('app-header', AppHeader);
customElements.define('fake-select', FakeSelect);
customElements.define('setting-field', SettingField);
customElements.define('section-panel', SectionPanel);
customElements.define('remote-panel', RemotePanel);
customElements.define('win-taskbar', WinTaskbar);
</script>
</body>
</html>
